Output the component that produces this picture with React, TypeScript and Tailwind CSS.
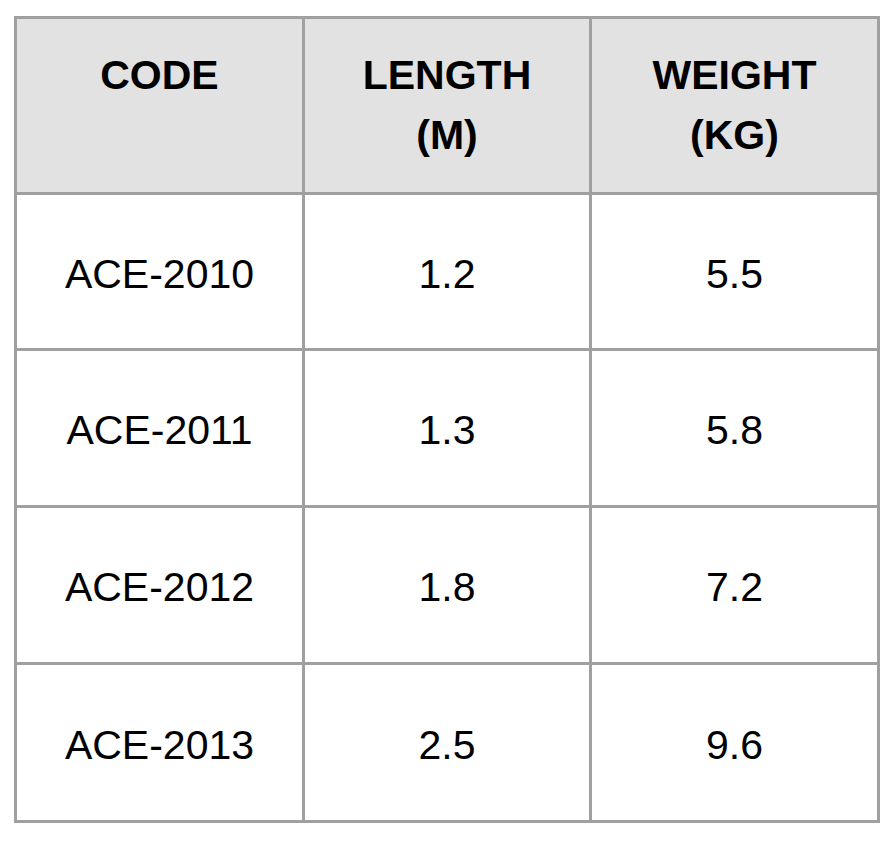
const headers = [["CODE"], ["LENGTH", "(M)"], ["WEIGHT", "(KG)"]];

const rows = [
  { cells: ["ACE-2010", "1.2", "5.5"], h: "h-[156px]" },
  { cells: ["ACE-2011", "1.3", "5.8"], h: "h-[157px]" },
  { cells: ["ACE-2012", "1.8", "7.2"], h: "h-[157px]" },
  { cells: ["ACE-2013", "2.5", "9.6"], h: "h-[155px]" },
];

const colBorder = ["border-r-[3px]", "border-r-[3px]", ""];

export default function App() {
  return (
    <div className="min-h-[858px] bg-white pl-[14px] pt-[16px] font-['Liberation_Sans',Arial,sans-serif] text-black">
      <div className="grid w-[866px] grid-cols-[288px_287px_285px] border-[3px] border-[#a0a0a0]">
        {headers.map((lines, i) => (
          <div
            key={i}
            className={`h-[176px] border-b-[3px] border-[#a0a0a0] bg-[#e2e2e2] pt-[26px] text-center text-[41px] font-bold leading-[60px] ${colBorder[i]}`}
          >
            {lines.map((l) => (
              <div key={l}>{l}</div>
            ))}
          </div>
        ))}
        {rows.map((row, r) =>
          row.cells.map((cell, c) => (
            <div
              key={`${r}-${c}`}
              className={`flex items-center justify-center border-[#a0a0a0] pt-[6px] text-[41px] ${row.h} ${colBorder[c]} ${
                r < rows.length - 1 ? "border-b-[3px]" : ""
              }`}
            >
              {cell}
            </div>
          ))
        )}
      </div>
    </div>
  );
}
